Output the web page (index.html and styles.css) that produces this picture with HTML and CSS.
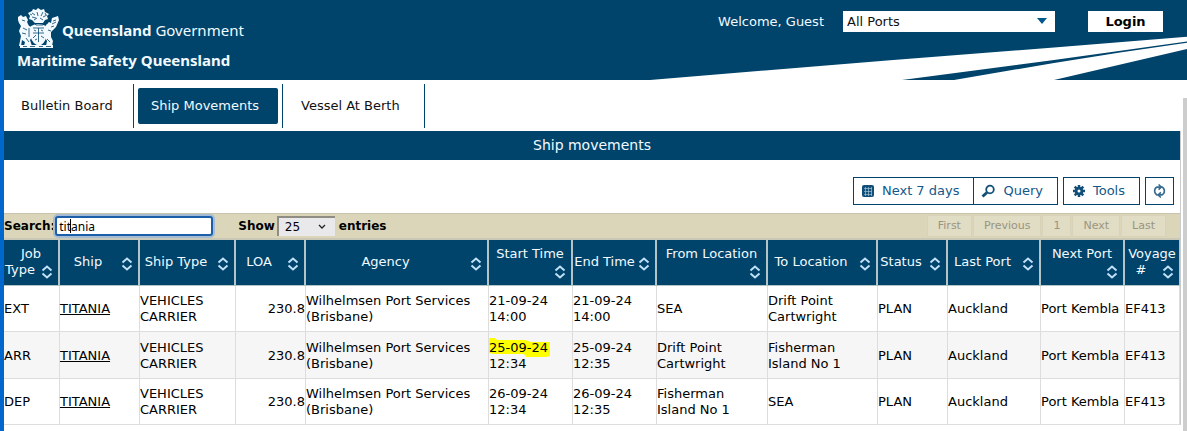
FILE: index.html
```html
<!DOCTYPE html>
<html lang="en">
<head>
<meta charset="utf-8">
<title>Ship movements</title>
<link rel="stylesheet" href="styles.css">
</head>
<body>
<header class="banner">
  <svg class="rays" viewBox="0 0 547 80" aria-hidden="true"><path fill="#fff" d="M10 80 247 60.500 414 47.500 547 36.700V41.500L414 60 262 80ZM314 80 414 63 480 52.500 547 42.700V49L414 80Z"/></svg>
  <div class="brand">
    <div class="brand-top">
      <svg class="crest" viewBox="0 0 43 40" aria-hidden="true">
        <g fill="#f2faff">
          <path d="M11 5l4-2 1-2 3 1 2-2 3 2 3-1 1 3 4 2-2 2 1 3-3 1-2 3h-8l-3-3-3-1 1-3z"/>
          <path d="M1 9l3-2 2 2 3-1 2 4-1 2 2 4 3 1v10l-2 3 2 6H7l1-4-3-2-1 6H2l2-10-2-5 2-5-2-3-1-3z"/>
          <path d="M29 17l3-3 2 1 1-5 6-2 1 4-3 7-5 5v5l2 4-1 5h-6l1-5-3-5z"/>
          <path d="M14 18q7-4 15 0v12q-1 5-7 8-7-3-8-8z"/>
          <path d="M3 37h33v3H3z"/>
        </g>
        <g fill="none" stroke="#00446c" stroke-width=".8">
          <path d="M15 5l3 2M20 4l1 4M26 4l-2 4M30 7l-4 2M15 9l4 1M13 6l2 1M17 12l3-2M23 10l3 2M28 5l1 2M12 15h5l2 2h7l2-2h3"/>
          <path d="M16 20h11M16 25h11M21.500 20v14M16 30l3-3M24 28l3 2M17 22l2 1M24 22l2 1M18 32l2-1"/>
          <path d="M5 12l3 1M6 20l4 2M5 25l4 1M12 20v9M36 13l3-1M35 16l4-2M34 19l3-1M31 22l3 1M30 31l3 3M9 30l3 4M6 38.500h4M13 38.500h5M22 38.500h4M29 38.500h5"/>
        </g>
      </svg>
      <span class="gov"><b>Queensland</b> Government</span>
    </div>
    <div class="agency">Maritime Safety Queensland</div>
  </div>
  <div class="account">
    <label class="welcome" for="port">Welcome, Guest</label>
    <span class="port-box">
      <select id="port" class="port"><option>All Ports</option></select>
      <svg class="port-arrow" viewBox="0 0 10 6" aria-hidden="true"><path d="M0 0h10L5 6z" fill="#00588c"/></svg>
    </span>
    <button class="login" type="button">Login</button>
  </div>
</header>

<main class="page">
  <nav class="tabs">
    <div class="tab-cell tab-first"><a class="tab" href="#">Bulletin Board</a></div>
    <div class="tab-cell tab-wide"><a class="tab tab-active" href="#">Ship Movements</a></div>
    <div class="tab-cell tab-last"><a class="tab" href="#">Vessel At Berth</a></div>
  </nav>
  <div class="content">
    <h1 class="title">Ship movements</h1>
    <div class="toolbar">
      <div class="group">
        <button class="tool" type="button"><svg class="icon" viewBox="0 0 14 14" aria-hidden="true"><rect x="1" y="1" width="12" height="12" rx="2" fill="#124f78"/><path d="M3 4.500h8M3 7.500h8M3 10.500h8M4.500 3v9M7.500 3v9M10.500 3v9" stroke="#9fc0d6" stroke-width=".7"/></svg>Next 7 days</button>
        <button class="tool tool-query" type="button"><svg class="icon" viewBox="0 0 14 14" aria-hidden="true"><circle cx="9" cy="5.500" r="3.800" fill="#fff" stroke="#124f78" stroke-width="1.800"/><path d="M6 8.500 1.500 12.500" stroke="#124f78" stroke-width="3"/></svg>Query</button>
      </div>
      <button class="tool tool-tools" type="button"><svg class="icon" viewBox="0 0 14 14" aria-hidden="true"><g stroke="#124f78" stroke-width="2.500"><path d="M7 1v12M1 7h12M2.700 2.700l8.600 8.600M11.300 2.700l-8.600 8.600"/></g><circle cx="7" cy="7" r="4.300" fill="#124f78"/><circle cx="7" cy="7" r="1.500" fill="#fff"/></svg>Tools</button>
      <button class="tool tool-refresh" type="button" aria-label="Refresh"><svg class="icon-refresh" viewBox="0 0 14 16" aria-hidden="true"><g fill="none" stroke="#35698f" stroke-width="1.700"><path d="M5 12.500C1 11 .5 5.500 4.500 3.800H8M9 3.500c4 1.500 4.500 7 .5 8.700H6"/><path d="M6 1l3 2.800L6 6.500M8.500 9.500l-3 2.800 3 2.700"/></g></svg></button>
    </div>

    <div class="filter">
      <label for="q">Search:</label>
      <span class="search-box"><input id="q" class="search" type="text" value="titania"><span class="caret"></span></span>
      <label class="show" for="len">Show</label>
      <span class="len-box"><select id="len" class="len"><option>25</option></select><svg class="len-arrow" viewBox="0 0 8 6" aria-hidden="true"><path d="M1 1l3 3 3-3" fill="none" stroke="#222" stroke-width="1.300"/></svg></span>
      <span>entries</span>
      <div class="pager">
        <button type="button" disabled>First</button><button type="button" disabled>Previous</button><button type="button" disabled>1</button><button type="button" disabled>Next</button><button type="button" disabled>Last</button>
      </div>
    </div>

    <svg width="0" height="0" class="defs" aria-hidden="true"><symbol id="sort" viewBox="0 0 16 16"><path d="M3.500 6.500 8 2.500l4.500 4M3.500 9.500 8 13.500l4.500-4" fill="none" stroke="#bfe0f5" stroke-width="2"/></symbol></svg>
    <table class="grid">
      <colgroup><col class="w56"><col class="w80"><col class="w96"><col class="w70"><col class="w183"><col class="w84"><col class="w84"><col class="w111"><col class="w110"><col class="w70"><col class="w93"><col class="w84"><col class="w55"></colgroup>
      <thead><tr>
        <th><div class="head">Job Type<svg class="sort"><use href="#sort"/></svg></div></th>
        <th><div class="head">Ship<svg class="sort"><use href="#sort"/></svg></div></th>
        <th><div class="head">Ship Type<svg class="sort"><use href="#sort"/></svg></div></th>
        <th><div class="head">LOA<svg class="sort"><use href="#sort"/></svg></div></th>
        <th><div class="head">Agency<svg class="sort"><use href="#sort"/></svg></div></th>
        <th><div class="head">Start Time<svg class="sort"><use href="#sort"/></svg></div></th>
        <th><div class="head">End Time<svg class="sort sort-tight"><use href="#sort"/></svg></div></th>
        <th><div class="head">From Location<svg class="sort"><use href="#sort"/></svg></div></th>
        <th><div class="head">To Location<svg class="sort"><use href="#sort"/></svg></div></th>
        <th><div class="head">Status<svg class="sort"><use href="#sort"/></svg></div></th>
        <th><div class="head">Last Port<svg class="sort"><use href="#sort"/></svg></div></th>
        <th><div class="head">Next Port<svg class="sort"><use href="#sort"/></svg></div></th>
        <th><div class="head">Voyage #<svg class="sort"><use href="#sort"/></svg></div></th>
      </tr></thead>
      <tbody>
        <tr><td>EXT</td><td><a href="#">TITANIA</a></td><td>VEHICLES CARRIER</td><td class="num">230.8</td><td>Wilhelmsen Port Services (Brisbane)</td><td>21-09-24<br>14:00</td><td>21-09-24<br>14:00</td><td>SEA</td><td>Drift Point Cartwright</td><td>PLAN</td><td>Auckland</td><td>Port Kembla</td><td>EF413</td></tr>
        <tr class="alt"><td>ARR</td><td><a href="#">TITANIA</a></td><td>VEHICLES CARRIER</td><td class="num">230.8</td><td>Wilhelmsen Port Services (Brisbane)</td><td><mark class="marker"><svg class="ink" viewBox="0 0 63 21" aria-hidden="true"><path fill="#ff0" d="M1 0 7 0 9 2H37L43 4H62V18L58 19H38L36 16H6L1 15Z"/></svg>25-09-24</mark><br>12:34</td><td>25-09-24<br>12:35</td><td>Drift Point Cartwright</td><td>Fisherman Island No 1</td><td>PLAN</td><td>Auckland</td><td>Port Kembla</td><td>EF413</td></tr>
        <tr><td>DEP</td><td><a href="#">TITANIA</a></td><td>VEHICLES CARRIER</td><td class="num">230.8</td><td>Wilhelmsen Port Services (Brisbane)</td><td>26-09-24<br>12:34</td><td>26-09-24<br>12:35</td><td>Fisherman Island No 1</td><td>SEA</td><td>PLAN</td><td>Auckland</td><td>Port Kembla</td><td>EF413</td></tr>
      </tbody>
    </table>
  </div>
</main>
<div class="scrollbar" aria-hidden="true"></div>
</body>
</html>
```
FILE: styles.css
```css
* { box-sizing: border-box; }
html { min-height: 100%; background: #fff; }
body {
  margin: 0;
  min-height: 100vh;
  border-left: 4px solid #0068cc;
  font: 13px/16px "DejaVu Sans", Verdana, sans-serif;
  color: #000;
  overflow: hidden;
}
button, input, select { font: inherit; margin: 0; border-radius: 0; }

.banner {
  position: relative;
  display: flex;
  justify-content: space-between;
  align-items: flex-start;
  height: 80px;
  background: #00446c;
  color: #f2faff;
}
.rays { position: absolute; right: 0; bottom: 0; width: 547px; height: 80px; }
.brand { padding: 8px 0 0 13px; font-family: "Noto Sans", sans-serif; white-space: nowrap; }
.brand-top { display: flex; align-items: center; gap: 2px; }
.crest { width: 43px; height: 40px; }
.gov { font-size: 15px; line-height: 20px; padding-top: 4px; }
.agency { font-size: 15px; line-height: 24px; font-weight: 700; }
.account { position: relative; display: flex; align-items: center; padding: 11px 24px 0 0; }
.welcome { margin-right: 19px; }
.port-box { position: relative; margin-right: 33px; }
.port {
  display: block;
  width: 212px;
  height: 21px;
  padding: 0 4px;
  border: 0;
  background: #fff;
  color: #111;
  appearance: none;
}
.port-arrow { position: absolute; right: 8px; top: 7px; width: 10px; height: 6px; }
.login { width: 75px; height: 21px; padding: 0; border: 0; background: #fff; font-weight: 700; color: #000; }

.tabs { display: flex; height: 51px; padding-top: 4px; align-items: flex-start; }
.tab-cell { padding: 4px; border-right: 1px solid #00446c; height: 44px; }
.tab-first { width: 130px; }
.tab-wide { width: 149px; }
.tab-last { width: 142px; }
.tab {
  display: block;
  padding: 10px 0 10px 13px;
  border-radius: 2px;
  color: #111;
  text-decoration: none;
  white-space: nowrap;
}
.tab-last .tab { padding-left: 14px; }
.tab-active { background: #00446c; color: #f2faff; }

.content { margin-right: 6px; border-right: 1px solid #ccc; }
.title {
  margin: 0;
  padding: 6px;
  background: #00446c;
  color: #f2faff;
  font-size: 14px;
  line-height: 17px;
  font-weight: 400;
  text-align: center;
}
.toolbar { display: flex; justify-content: flex-end; gap: 5px; padding: 17px 6px 8px; }
.group { display: flex; }
.tool {
  display: flex;
  align-items: center;
  gap: 7px;
  height: 28px;
  padding: 0 14px 0 7px;
  border: 1px solid #00446c;
  background: #fff;
  color: #14588a;
}
.tool-query { border-left-width: 0; gap: 8px; }
.icon { width: 14px; height: 14px; }
.tool-tools { padding-left: 8px; }
.tool-refresh { padding: 0 7px; }
.icon-refresh { width: 13px; height: 16px; }

.filter {
  display: flex;
  align-items: center;
  height: 27px;
  border-top: 1px solid #c8c4ac;
  border-bottom: 2px solid #c9c8b6;
  background: #dbd6b9;
  font-size: 12px;
  font-weight: 700;
}
.search-box { position: relative; }
.search {
  display: block;
  width: 158px;
  height: 20px;
  padding: 0 2px;
  border: 2px solid #1c5fa8;
  border-radius: 3px;
  outline: 0;
  box-shadow: 0 0 0 2px #a5bcd4;
  background: #fff;
  font: 12px/16px "Noto Sans", sans-serif;
}
.caret { position: absolute; left: 15px; top: 3px; width: 1px; height: 14px; background: #000; }
.show { margin: 0 2px 0 25px; }
.len-box { position: relative; margin-right: 4px; }
.len {
  display: block;
  width: 58px;
  height: 20px;
  padding: 0 6px;
  border: 0;
  border-top: 2px solid #8f8c84;
  border-left: 2px solid #8f8c84;
  background: #e9e9ec;
  font-weight: 400;
  appearance: none;
}
.len-arrow { position: absolute; right: 9px; top: 8px; width: 8px; height: 6px; }
.pager { display: flex; margin: 0 14px 0 auto; gap: 1px; }
.pager button {
  height: 22px;
  padding: 0 10px;
  border: 1px solid #d8d3b8;
  background: #e1dcc4;
  color: #99957f;
  font-size: 11px;
  font-weight: 400;
}
.defs { display: block; }

.grid { width: 100%; table-layout: fixed; border-spacing: 0; }
.grid th {
  height: 46px;
  padding: 0;
  border-right: 2px solid #b4c3c6;
  border-bottom: 1px solid #b4c3c6;
  background: #00446c;
  color: #f2faff;
  font-weight: 400;
  vertical-align: middle;
}
.grid th:last-child { border-right: 1px solid #b4c3c6; }
.head { display: flow-root; padding-top: 1px; text-align: center; }
.sort { float: right; width: 16px; height: 16px; margin: 2px 3px 0; }
.sort-tight { margin-left: 0; }
.grid td {
  height: 46px;
  padding: 1px 1px 0 0;
  border-right: 1px solid #ddd;
  border-bottom: 1px solid #ddd;
}
.alt td { height: 47px; background: #f6f6f6; }
.grid .num { padding-right: 0; text-align: right; }
.grid a { color: #000; }
.marker { position: relative; isolation: isolate; background: none; color: inherit; }
.ink { position: absolute; left: -1px; top: -2px; width: 63px; height: 21px; z-index: -1; }
.w55 { width: 55px; }
.w56 { width: 56px; }
.w70 { width: 70px; }
.w80 { width: 80px; }
.w84 { width: 84px; }
.w93 { width: 93px; }
.w96 { width: 96px; }
.w110 { width: 110px; }
.w111 { width: 111px; }
.w183 { width: 183px; }

.scrollbar { position: fixed; right: 0; top: 98px; bottom: 0; width: 4px; background: #cdcdcd; }
```
